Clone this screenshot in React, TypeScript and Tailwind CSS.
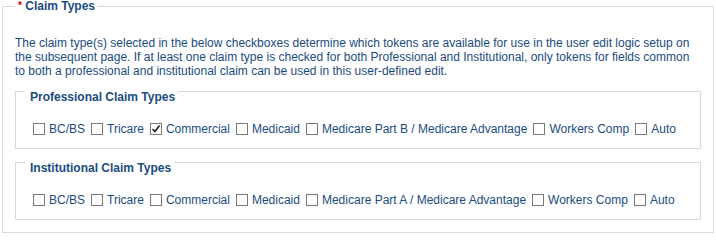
import React from "react";

const Box = ({ checked }: { checked?: boolean }) => (
  <span className="inline-flex w-[12px] h-[12px] border border-[#7a7a7a] bg-white shrink-0 mt-[1px] items-center justify-center">
    {checked && (
      <svg width="10" height="10" viewBox="0 0 10 10">
        <path d="M1.5 5 L4 7.5 L8.5 1.5" fill="none" stroke="#222" strokeWidth="1.7" />
      </svg>
    )}
  </span>
);

const Group = ({ title, items, checked }: { title: string; items: string[]; checked?: string }) => (
  <fieldset className="border border-[#d9d9d9] pl-[17px] pr-[10px] pb-[12px] min-w-0">
    <legend className="ml-[-8px] pl-[5px] pr-[3px] pt-[12px] leading-[14px] font-bold text-[12px]">{title}</legend>
    <div className="flex items-start mt-[18px] gap-[6px]">
      {items.map((it) => (
        <div key={it} className="flex items-start gap-[4px]">
          <Box checked={it === checked} />
          <span className="leading-[14px] whitespace-nowrap">{it}</span>
        </div>
      ))}
    </div>
  </fieldset>
);

export default function App() {
  return (
    <div className="bg-white w-[716px] h-[237px] text-[12px] text-[#1a4c80]" style={{ fontFamily: '"Liberation Sans", Arial, sans-serif' }}>
      <fieldset className="ml-[2px] w-[712px] border border-[#d9d9d9] px-[12px] pb-[12px] min-w-0">
        <legend className="px-[3px] leading-[12px] font-bold text-[12px]">
          <span className="text-[#d00000] text-[10px] align-top">*</span> Claim Types
        </legend>
        <p className="mt-[24px] leading-[14px] w-[686px]">
          The claim type(s) selected in the below checkboxes determine which tokens are available for use in the user edit logic setup on the subsequent page. If at least one claim type is checked for both Professional and Institutional, only tokens for fields common to both a professional and institutional claim can be used in this user-defined edit.
        </p>
        <Group
          title="Professional Claim Types"
          checked="Commercial"
          items={["BC/BS", "Tricare", "Commercial", "Medicaid", "Medicare Part B / Medicare Advantage", "Workers Comp", "Auto"]}
        />
        <Group
          title="Institutional Claim Types"
          items={["BC/BS", "Tricare", "Commercial", "Medicaid", "Medicare Part A / Medicare Advantage", "Workers Comp", "Auto"]}
        />
      </fieldset>
    </div>
  );
}
